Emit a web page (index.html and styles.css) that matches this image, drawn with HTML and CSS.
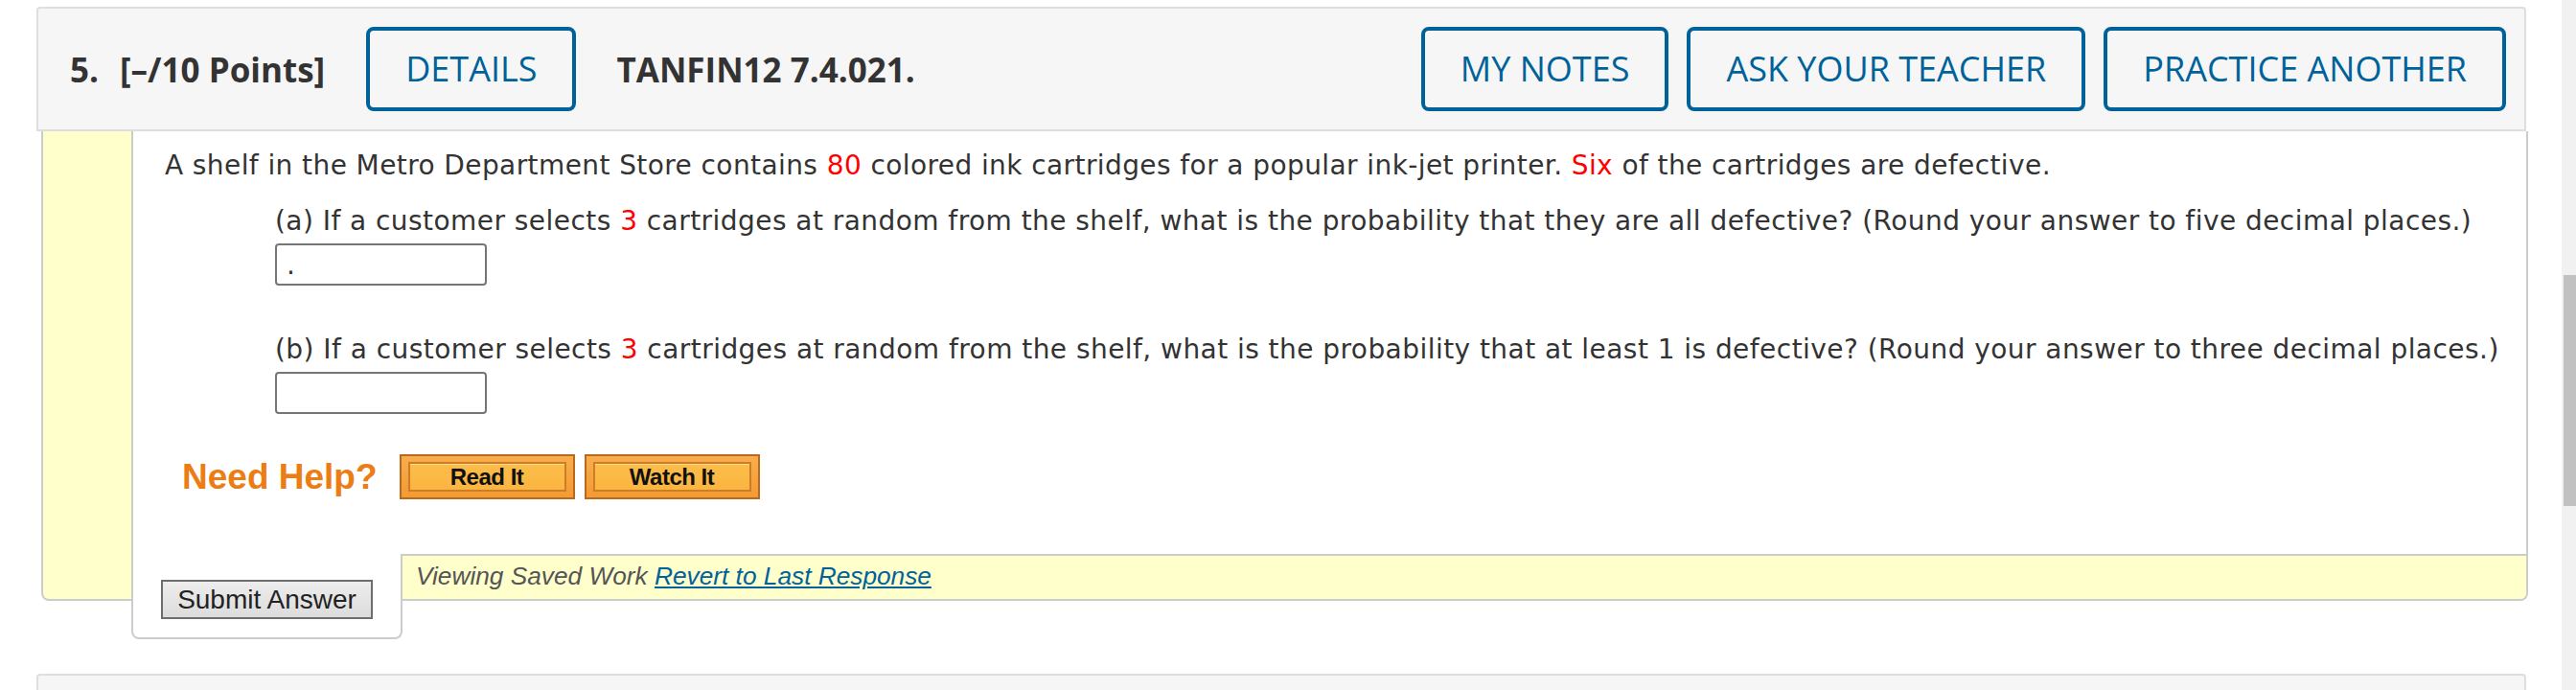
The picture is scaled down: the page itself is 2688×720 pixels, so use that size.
FILE: index.html
```html
<!DOCTYPE html>
<html lang="en">
<head>
<meta charset="utf-8">
<title>Question 5</title>
<link rel="stylesheet" href="styles.css">
</head>
<body>
<div class="viewport">
  <div class="page">
    <div class="qhead">
      <span class="qnum">5.</span>
      <span class="qpts">[&ndash;/10 Points]</span>
      <a class="hbtn details" href="#">DETAILS</a>
      <span class="qid">TANFIN12 7.4.021.</span>
      <div class="hactions">
        <a class="hbtn" href="#">MY NOTES</a>
        <a class="hbtn" href="#">ASK YOUR TEACHER</a>
        <a class="hbtn" href="#">PRACTICE ANOTHER</a>
      </div>
    </div>
    <div class="qbody">
      <div class="strip"></div>
      <div class="main">
        <div class="content">
          <p class="stem">A shelf in the Metro Department Store contains <span class="red">80</span> colored ink cartridges for a popular ink-jet printer. <span class="red">Six</span> of the cartridges are defective.</p>
          <div class="part">
            <p class="ptext">(a) If a customer selects <span class="red">3</span> cartridges at random from the shelf, what is the probability that they are all defective? (Round your answer to five decimal places.)</p>
            <input class="ans" type="text" value=".">
          </div>
          <div class="part part-b">
            <p class="ptext">(b) If a customer selects <span class="red">3</span> cartridges at random from the shelf, what is the probability that at least 1 is defective? (Round your answer to three decimal places.)</p>
            <input class="ans" type="text" value="">
          </div>
          <div class="help">
            <span class="needhelp">Need Help?</span>
            <span class="hlp-btn"><span class="hlp-inner">Read It</span></span>
            <span class="hlp-btn"><span class="hlp-inner">Watch It</span></span>
          </div>
        </div>
        <div class="footer">
          <div class="submit-box"><button class="submit" type="button">Submit Answer</button></div>
          <div class="saved">Viewing Saved Work <a class="revert" href="#">Revert to Last Response</a></div>
        </div>
      </div>
    </div>
    <div class="nextq"></div>
  </div>
  <div class="scrollbar"><div class="thumb"></div></div>
</div>
</body>
</html>
```
FILE: styles.css
```css
* { box-sizing: border-box; }
html, body { margin: 0; padding: 0; background: #fff; }
body { width: 2688px; height: 720px; overflow: hidden; }

.viewport { display: flex; height: 720px; }
.page { flex: 1; min-width: 0; }

/* header */
.qhead {
  margin: 7px 37px 0 38px;
  height: 130px;
  background: #f6f6f6;
  border: 2px solid #dedede;
  border-radius: 4px 4px 0 0;
  display: flex;
  align-items: center;
  padding: 0 19px 0 33px;
  font-family: "Open Sans", sans-serif;
  font-size: 35px;
  color: #333;
}
.qnum { font-weight: 700; }
.qpts { font-weight: 700; margin-left: 22px; }
.qid { font-weight: 700; margin-left: 42px; }
.hbtn {
  display: flex;
  align-items: center;
  height: 88px;
  padding: 0 37px;
  border: 4px solid #00629b;
  border-radius: 8px;
  color: #00629b;
  text-decoration: none;
  font-size: 36px;
  font-weight: 400;
  line-height: 1;
}
.details { margin-left: 43px; }
.hactions { margin-left: auto; display: flex; gap: 19px; }

/* body */
.qbody {
  display: flex;
  margin: 0 35px 0 43px;
  border: 2px solid #ccc;
  border-top: 0;
  border-radius: 0 0 8px 8px;
  background: #ffffcc;
}
.strip { width: 92px; flex: none; }
.main {
  flex: 1;
  background: #fff;
  border-left: 2px solid #ccc;
  border-radius: 0 0 8px 0;
}
.content {
  padding: 15px 20px 0 33px;
  font-family: "DejaVu Sans", Verdana, sans-serif;
  font-size: 28px;
  color: #333;
}
.content p { margin: 0; line-height: 42px; }
.stem { letter-spacing: 0.41px; }
.ptext { letter-spacing: 0.45px; }
.red { color: #ff0000; }
.part { margin: 16px 0 0 115px; }
.part-b { margin-top: 46px; }
.ans {
  display: block;
  margin-top: 2px;
  width: 221px;
  height: 44px;
  border: 2px solid #767676;
  border-radius: 4px;
  background: #fff;
  padding: 0 0 0 10px;
  font-family: "DejaVu Sans", Verdana, sans-serif;
  font-size: 28px;
  color: #333;
}

.help {
  display: flex;
  align-items: center;
  margin: 42px 0 0 18px;
  height: 47px;
}
.needhelp {
  font-family: "Liberation Sans", Arial, sans-serif;
  font-weight: 700;
  font-size: 37px;
  color: #ec7d14;
  margin-right: 23px;
}
.hlp-btn {
  display: flex;
  width: 183px;
  height: 47px;
  padding: 6px 7px;
  margin-right: 10px;
  border: 2px solid #b9691c;
  background: linear-gradient(#f8ad4e, #f39a34);
}
.hlp-inner {
  flex: 1;
  display: flex;
  align-items: center;
  justify-content: center;
  border: 2px solid #cf7d24;
  box-shadow: inset 0 1px 0 #ffd98c;
  background: linear-gradient(#fcbd4a, #fbb540);
  font-family: "Liberation Sans", Arial, sans-serif;
  font-weight: 700;
  font-size: 24px;
  color: #111;
  letter-spacing: -0.5px;
}

.footer {
  display: flex;
  align-items: flex-start;
  margin-top: 57px;
}
.submit-box {
  flex: none;
  width: 283px;
  height: 89px;
  margin: 0 0 -42px -2px;
  padding: 27px 0 0 29px;
  background: #fff;
  border: 2px solid #ccc;
  border-top: 0;
  border-radius: 0 0 8px 8px;
}
.submit {
  display: block;
  width: 221px;
  height: 41px;
  padding: 0;
  border: 2px solid #6d6d6d;
  background: linear-gradient(#ededed, #dcdcdc);
  font-family: "Liberation Sans", Arial, sans-serif;
  font-size: 28px;
  color: #222;
}
.saved {
  flex: 1;
  height: 47px;
  background: #ffffcc;
  border-top: 2px solid #ccc;
  border-radius: 0 0 6px 0;
  padding: 6px 0 0 14px;
  line-height: 30px;
  font-family: "Liberation Sans", Arial, sans-serif;
  font-style: italic;
  font-size: 26.25px;
  color: #555;
}
.revert { color: #00629b; text-decoration: underline; }

.nextq {
  margin: 76px 37px 0 38px;
  height: 40px;
  background: #f6f6f6;
  border: 2px solid #dedede;
  border-radius: 4px 4px 0 0;
}

/* scrollbar */
.scrollbar {
  width: 15px;
  flex: none;
  background: #f1f1f1;
  padding: 287px 0 0 2px;
}
.thumb { height: 241px; background: #c1c1c1; }
```
